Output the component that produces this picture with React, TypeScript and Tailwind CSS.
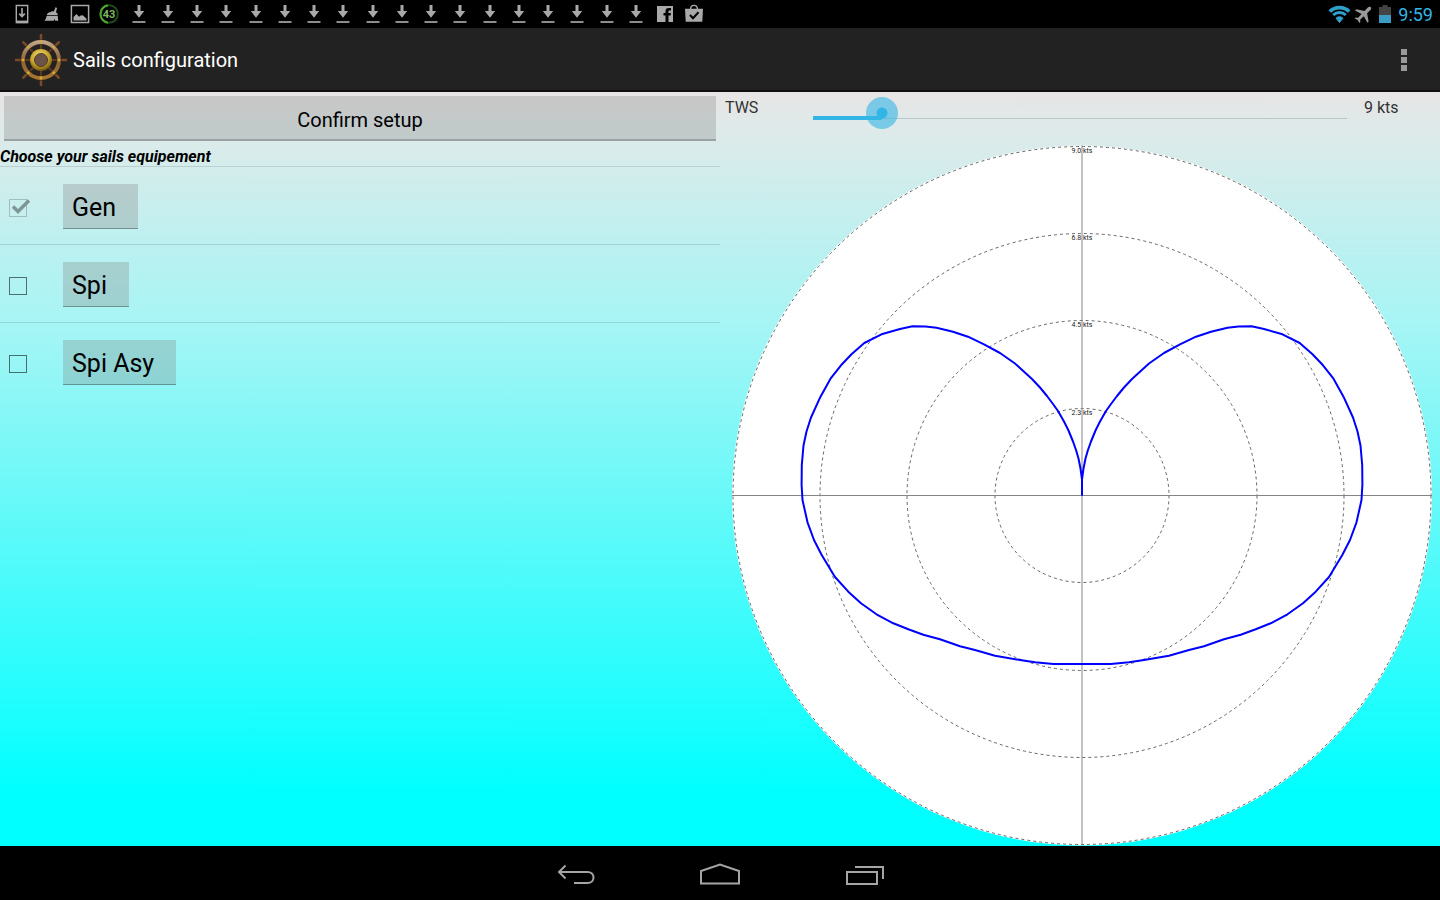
import { useState } from 'react';

const sails = [
  { id: 'gen', name: 'Gen', locked: true },
  { id: 'spi', name: 'Spi', locked: false },
  { id: 'spi-asy', name: 'Spi Asy', locked: false },
];

const rings = [
  { radius: 349, label: '9.0 kts' },
  { radius: 262, label: '6.8 kts' },
  { radius: 175, label: '4.5 kts' },
  { radius: 87, label: '2.3 kts' },
];

// one side of the polar, measured from the centre of the plot
const polar = [
  [0, 0], [0, -16], [1.5, -27], [3.5, -37], [5.8, -45], [9, -54], [13.5, -65], [18, -74],
  [24, -84.5], [29, -91.5], [35, -99.5], [42, -108], [50, -116.5],
  [67, -132], [82, -142.5], [98, -151.2], [114, -158.8], [129, -163.8], [145.5, -167.8],
  [156.5, -168.9], [169.5, -169.2], [182, -166.5], [200.5, -161.2], [217.7, -152.5],
  [230.5, -141.2], [241, -130.2], [251.5, -116.8], [261.5, -98.8], [271, -78], [275.5, -64],
  [278.5, -50], [280.2, -30.5], [280.4, -10.5], [279.5, 4.5], [274.5, 26.8], [268, 44.5],
  [260.3, 59.5], [247, 81.5], [233.7, 96.2], [221, 107.8], [205.5, 118.8], [188.7, 127.8],
  [173.7, 133.8], [158.7, 139.2], [142, 143.8], [122, 150.8], [107, 154.5], [87, 160.2],
  [62, 164.5], [47, 166.8], [28.7, 168.5], [0, 168.5],
];

const starboard = polar.map(([x, y]) => `${350 + x},${350 + y}`).join(' ');
const port = polar.map(([x, y]) => `${350 - x},${350 + y}`).join(' ');

function DownloadIcon() {
  return (
    <svg viewBox="0 0 24 24" className="size-6" fill="#a9a9a9">
      <path d="M10.5 3h3v6h3.7L12 15.8 6.8 9h3.7z" />
      <path d="M5.5 19h13v2h-13z" fill="#8d8d8d" />
    </svg>
  );
}

function StatusIcons() {
  return (
    <div className="grid w-[702px] grid-cols-24 justify-items-center">
      <svg viewBox="0 0 24 24" className="size-6" fill="none" stroke="#a9a9a9">
        <path d="M6.3 3.5h11.4v17H6.3z" strokeWidth="1.4" />
        <path d="M6.3 18.6h11.4v2.6H6.3z" fill="#a9a9a9" stroke="none" />
        <path d="M12 6v8M9.2 11.6l2.8 3 2.8-3" strokeWidth="1.6" />
      </svg>
      <svg viewBox="0 0 24 24" className="size-6" fill="#a9a9a9">
        <path d="M16.5 5.2l1.6.8-1.2 4.2c1.3.5 2 1.7 1.8 3H7.8c.2-1.8 1.7-3.2 3.4-3 .8-.9 2.3-1.2 3.6-.7z" />
        <path d="M7.6 14h11.2l.4 4.8H16l-.5-2-.8 2H5.3c1.3-1.2 2-2.8 2.3-4.8z" />
      </svg>
      <svg viewBox="0 0 24 24" className="size-6" fill="none">
        <path d="M3.4 3.6h17.2v16.8H3.4z" stroke="#a9a9a9" strokeWidth="1.5" />
        <path d="M5.5 18.5v-3.6l3-3 2.6 2.8 2-1.4 2 .2 3.4 3.3v1.7z" fill="#a9a9a9" />
      </svg>
      <svg viewBox="0 0 24 24" className="size-6" fill="none" strokeWidth="2">
        <circle cx="12" cy="12" r="8.8" stroke="#1f4a1a" />
        <path d="M11 20.7A8.8 8.8 0 0 1 11 3.3" stroke="#4fa62c" />
        <text x="12" y="16" textAnchor="middle" fontSize="11" fontWeight="700" fill="#7cb860">43</text>
      </svg>
      {Array.from({ length: 18 }, (_, i) => (
        <DownloadIcon key={i} />
      ))}
      <svg viewBox="0 0 24 24" className="size-6">
        <path d="M4 4h16v16H4z" fill="#a9a9a9" />
        <path d="M12.5 20v-6.5h-2v-2.6h2V9.2c0-2.2 1.3-3.3 3.2-3.3H18v2.5h-1.4c-.9 0-1.1.4-1.1 1.1v1.4h2.4l-.3 2.6h-2.1V20z" fill="#000" />
      </svg>
      <svg viewBox="0 0 24 24" className="size-6" fill="none">
        <path d="M3 6.8h18l-.7 13H3.7z" fill="#a9a9a9" />
        <path d="M8.5 7c.2-2.4 1.6-3.6 3.5-3.6s3.3 1.2 3.5 3.6" stroke="#a9a9a9" strokeWidth="1.4" />
        <path d="M8 13l3 3.2 5.5-6" stroke="#000" strokeWidth="2" />
      </svg>
    </div>
  );
}

function StatusBar() {
  return (
    <div className="flex h-7 items-center justify-between bg-black px-[7px]">
      <StatusIcons />
      <div className="flex items-center">
        <svg viewBox="0 0 24 24" className="size-6" fill="none" stroke="#2f9fcb">
          <path d="M2.8 9.6C8 4.3 17 4.3 22.2 9.6" strokeWidth="3.6" />
          <path d="M6.2 13c3.6-3.4 9-3.4 12.6 0" strokeWidth="3" />
          <path d="M9 16.2c2-1.9 5-1.9 7 0l-3.5 4.3z" fill="#2f9fcb" />
        </svg>
        <svg viewBox="0 0 24 24" className="size-6" fill="#999">
          <path d="M19.8 5.2c-.8-.8-2.2-.4-3 .4l-3.2 3.3-8.3-1.6L4 8.600l6.600 3.500-3.500 3.700-2.400-.3-1 1 3 1.600 1.700 3 1-1-.3-2.400 3.700-3.500 3.600 6.500 1.200-1.200-1.500-8.300 3.300-3.200c.8-.8 1.200-2 .4-2.800z" />
        </svg>
        <svg viewBox="0 0 12 20" className="ml-1 h-5 w-3">
          <path d="M3.5 1h5v2H12v8H0V3h3.5z" fill="#444" />
          <path d="M0 11h12v8H0z" fill="#3a9cc4" />
        </svg>
        <span className="ml-[7px] pt-px text-lg leading-7 text-[#33b5e5]">9:59</span>
      </div>
    </div>
  );
}

function WheelIcon() {
  const angles = [0, 45, 90, 135, 180, 225, 270, 315];
  return (
    <svg viewBox="0 0 52 52" className="size-[52px]" fill="none">
      <defs>
        <linearGradient id="rim" x1="0" y1="0" x2="0" y2="1">
          <stop offset="0" stopColor="#bfa489" />
          <stop offset=".5" stopColor="#8a6238" />
          <stop offset="1" stopColor="#a87632" />
        </linearGradient>
        <radialGradient id="hub" cx=".45" cy=".35" r=".65">
          <stop offset="0" stopColor="#f4e58a" />
          <stop offset=".6" stopColor="#c9a62c" />
          <stop offset="1" stopColor="#6f5410" />
        </radialGradient>
      </defs>
      {angles.map((a) => (
        <g key={a} transform={`rotate(${a} 26 26)`}>
          <path d="M26 0v18" stroke="#63391e" strokeWidth="2" />
          <path d="M26 1v4" stroke="#7a4a2a" strokeWidth="2.6" strokeLinecap="round" />
        </g>
      ))}
      <circle cx="26" cy="26" r="18" stroke="#3b2814" strokeWidth="5" />
      <circle cx="26" cy="26" r="18" stroke="url(#rim)" strokeWidth="3.8" />
      {angles.map((a) => (
        <circle key={a} cx="26" cy="8" r="1.4" fill="#d2ab37" transform={`rotate(${a} 26 26)`} />
      ))}
      <circle cx="26" cy="26" r="11" fill="url(#hub)" />
      <circle cx="26" cy="26" r="6.5" fill="#6b5347" stroke="#4f3c1c" />
    </svg>
  );
}

function ActionBar() {
  return (
    <header className="flex h-16 items-center border-b-2 border-[#0e0e0e] bg-[#222] pt-[2px] pr-6 pl-[15px]">
      <WheelIcon />
      <h1 className="ml-[6px] flex-1 text-xl text-white">Sails configuration</h1>
      <button type="button" aria-label="More options" className="flex w-6 flex-col items-center gap-[2px]">
        <span className="size-[6px] bg-[#999]" />
        <span className="size-[6px] bg-[#999]" />
        <span className="size-[6px] bg-[#999]" />
      </button>
    </header>
  );
}

function SailList() {
  const [checked, setChecked] = useState<string[]>(['gen']);

  const toggle = (id: string) => {
    setChecked((prev) => (prev.includes(id) ? prev.filter((s) => s !== id) : [...prev, id]));
  };

  return (
    <ul>
      {sails.map((sail) => (
        <li key={sail.id} className="flex items-center border-t border-black/12 pt-[17px] pb-[15px] pl-[9px]">
          <label className="relative mt-[2px] flex w-[54px]">
            <input
              type="checkbox"
              aria-label={sail.name}
              checked={checked.includes(sail.id)}
              disabled={sail.locked}
              onChange={() => toggle(sail.id)}
              className="peer size-[18px] appearance-none border border-black/55 disabled:border-black/20"
            />
            <svg viewBox="0 0 22 18" className="pointer-events-none absolute top-0 left-0 hidden h-[18px] w-[22px] peer-checked:block" fill="none">
              <path d="M4 7.5l5 5 11-11" stroke="#7f9696" strokeWidth="3.4" />
            </svg>
          </label>
          <button type="button" className="h-[45px] border-b border-black/30 bg-[#808080]/30 pt-[3px] pr-[22px] pl-[9px] text-[25px] leading-8 text-black">
            {sail.name}
          </button>
        </li>
      ))}
    </ul>
  );
}

function WindSlider() {
  const [speed, setSpeed] = useState(9);
  const max = 70;

  return (
    <div className="flex h-[53px] items-start pt-[5px] pl-[5px] text-base leading-[22px] text-[#333]">
      <label htmlFor="tws" className="w-[72px]">TWS</label>
      <input
        id="tws"
        type="range"
        min={0}
        max={max}
        value={speed}
        onChange={(e) => setSpeed(Number(e.target.value))}
        style={{ backgroundSize: `calc((100% - 32px) * ${speed / max}) 4px, calc(100% - 32px) 1px` }}
        className="h-8 min-w-0 flex-1 appearance-none bg-[linear-gradient(#33b5e5,#33b5e5),linear-gradient(#b9c6c8,#b9c6c8)] bg-[position:16px_19px,16px_21px] bg-no-repeat [&::-webkit-slider-thumb]:size-8 [&::-webkit-slider-thumb]:appearance-none [&::-webkit-slider-thumb]:rounded-full [&::-webkit-slider-thumb]:bg-[radial-gradient(circle,#33b5e5_5px,rgb(51_181_229/0.6)_6px)]"
      />
      <output htmlFor="tws" className="w-[77px] pl-px">{speed} kts</output>
    </div>
  );
}

function PolarChart() {
  return (
    <svg viewBox="0 0 700 700" className="w-full flex-1" fill="none">
      <circle cx="350" cy="350" r="350" fill="#fff" />
      {rings.map((ring) => (
        <circle key={ring.radius} cx="350" cy="350" r={ring.radius} stroke="#555" strokeWidth="0.9" strokeDasharray="3 3" />
      ))}
      {rings.map((ring) => (
        <text key={ring.label} x="350" y={356 - ring.radius} textAnchor="middle" fontSize="7" fill="#222">
          {ring.label}
        </text>
      ))}
      <path d="M0 350h700M350 0v700" stroke="#858585" />
      <polyline points={starboard} stroke="#0000ff" strokeWidth="2" strokeLinejoin="round" />
      <polyline points={port} stroke="#0000ff" strokeWidth="2" strokeLinejoin="round" />
    </svg>
  );
}

function NavBar() {
  return (
    <nav className="flex h-[54px] items-center justify-center gap-[104px] bg-black pt-1">
      <button type="button" aria-label="Back">
        <svg viewBox="0 0 40 24" className="h-6 w-10" fill="none" stroke="#a5a5a5" strokeWidth="2">
          <path d="M9.5 2.5L3 9l6.500 6.500M3 9h28.500c3.500 0 6 2.200 6 5.500s-2.500 5.500-6 5.500H18" />
        </svg>
      </button>
      <button type="button" aria-label="Home">
        <svg viewBox="0 0 40 24" className="h-6 w-10" fill="none" stroke="#a5a5a5" strokeWidth="2">
          <path d="M1 20.5V8l19-6.500L39 8v12.500z" />
        </svg>
      </button>
      <button type="button" aria-label="Recent apps">
        <svg viewBox="0 0 40 24" className="h-6 w-10" fill="none" stroke="#a5a5a5" strokeWidth="2">
          <path d="M3 9h30v12H3zM11 4h28v12" />
        </svg>
      </button>
    </nav>
  );
}

export default function App() {
  return (
    <div className="flex min-h-screen flex-col bg-black font-[Roboto,sans-serif]">
      <StatusBar />
      <ActionBar />
      <main className="grid flex-1 grid-cols-2 bg-[linear-gradient(#e8e4e4,#e0e9e9_4%,#d6eceb_9%,#bdf0f0_20%,#a6f5f5_31%,#00ffff_93%)]">
        <section>
          <div className="px-1 pt-1">
            <button type="button" className="h-[45px] w-full border-b-2 border-black/20 bg-[#808080]/30 pt-1 text-xl text-black">
              Confirm setup
            </button>
          </div>
          <h2 className="h-[25px] pt-[5px] text-base leading-[22px] font-bold text-black italic">Choose your sails equipement</h2>
          <SailList />
        </section>
        <section className="flex flex-col">
          <WindSlider />
          <div className="flex flex-1 pr-2 pl-3">
            <PolarChart />
          </div>
        </section>
      </main>
      <NavBar />
    </div>
  );
}
